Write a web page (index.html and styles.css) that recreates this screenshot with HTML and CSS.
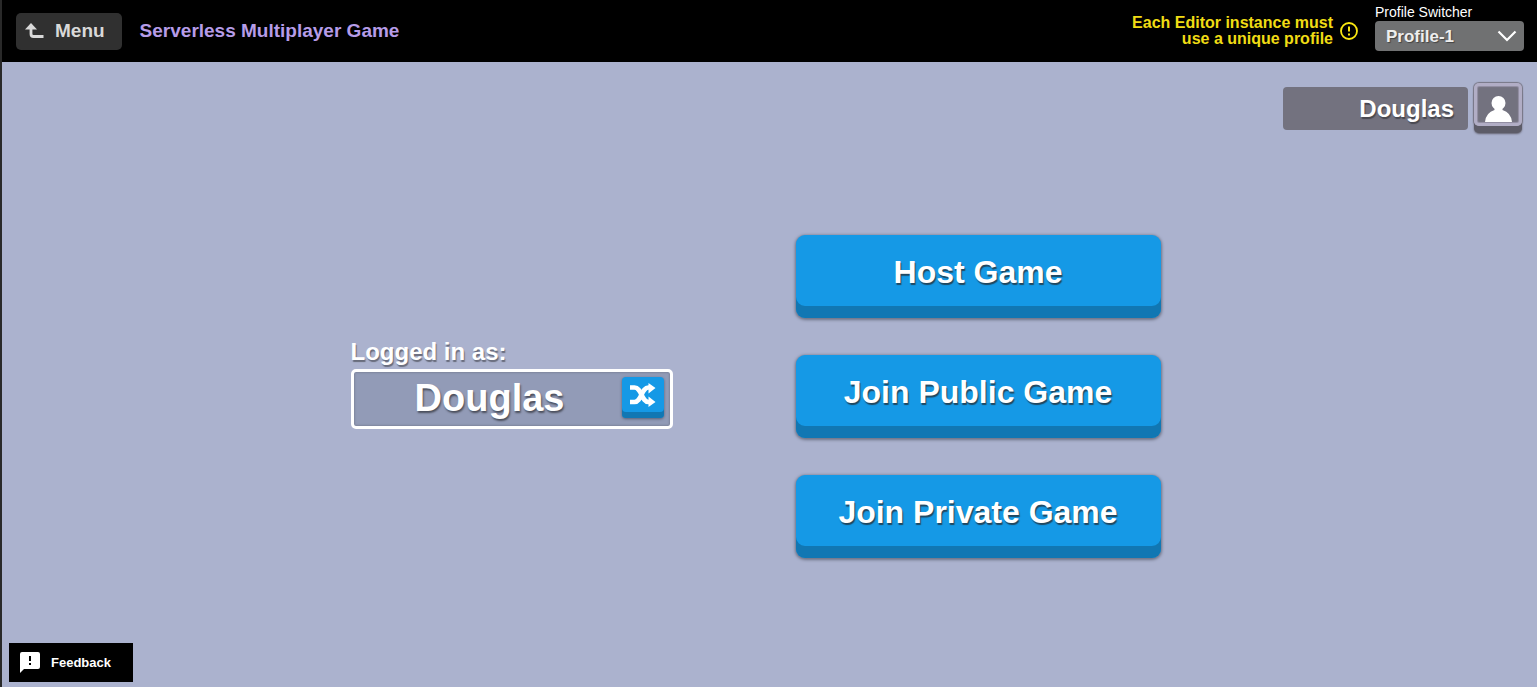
FILE: index.html
```html
<!DOCTYPE html>
<html lang="en">
<head>
<meta charset="utf-8">
<title>Serverless Multiplayer Game</title>
<link rel="stylesheet" href="styles.css">
</head>
<body>
<header class="topbar">
  <button class="menu" type="button">
    <svg width="20" height="16" viewBox="0 0 20 16" aria-hidden="true"><path d="M6 4v7q0 2.500 2.500 2.500H18.500" fill="none" stroke="currentColor" stroke-width="2.800"/><path d="M6 0 12 6.500H0z" fill="currentColor"/></svg>
    <span>Menu</span>
  </button>
  <h1 class="title">Serverless Multiplayer Game</h1>
  <p class="warning">Each Editor instance must<br>use a unique profile</p>
  <svg class="warning-icon" width="18" height="18" viewBox="0 0 18 18" aria-hidden="true"><circle cx="9" cy="9" r="8" fill="none" stroke="currentColor" stroke-width="1.800"/><path d="M9 4.500v5M9 11.500v2" stroke="currentColor" stroke-width="2"/></svg>
  <div class="switcher">
    <label for="profile">Profile Switcher</label>
    <div class="select-wrap">
      <select id="profile"><option>Profile-1</option></select>
      <svg class="chevron" width="20" height="12" viewBox="0 0 20 12" aria-hidden="true"><path d="m1.500 1.500 8.500 8.500 8.500-8.500" fill="none" stroke="currentColor" stroke-width="2.200"/></svg>
    </div>
  </div>
</header>
<main class="stage">
  <div class="user">
    <span class="user-name">Douglas</span>
    <button class="avatar" type="button" aria-label="Player profile">
      <svg width="27" height="26" viewBox="0 0 27 26" aria-hidden="true"><circle cx="13.500" cy="7" r="7" fill="#fff"/><path d="M9.500 11h8v3q8.500 2.500 9.500 12H0q1-9.500 9.500-12z" fill="#fff"/></svg>
    </button>
  </div>
  <div class="content">
    <section class="login">
      <label class="login-label" for="player">Logged in as:</label>
      <div class="name-box">
        <output class="name" id="player">Douglas</output>
        <button class="shuffle" type="button" aria-label="Random name">
          <svg width="27" height="24" viewBox="0 0 27 24" aria-hidden="true"><path d="M1 4.500h4.500c7 0 7 14.500 14 14.500H21M1 19h4.500c7 0 7-14.500 14-14.500H21" fill="none" stroke="#fff" stroke-width="4.600"/><path d="m19.500 0 7 5-7 5.500zM19.500 13.500l7 5.500-7 5z" fill="#fff"/></svg>
        </button>
      </div>
    </section>
    <nav class="actions">
      <button class="action" type="button">Host Game</button>
      <button class="action" type="button">Join Public Game</button>
      <button class="action" type="button">Join Private Game</button>
    </nav>
  </div>
  <button class="feedback" type="button">
    <svg width="20" height="21" viewBox="0 0 20 21" aria-hidden="true"><path d="M2 0h16q2 0 2 2v13q0 2-2 2H4l-4 4V2q0-2 2-2z" fill="#fff"/><path d="M10 4v5M10 11v2" stroke="#000" stroke-width="2"/></svg>
    <span>Feedback</span>
  </button>
</main>
</body>
</html>
```
FILE: styles.css
```css
* { box-sizing: border-box; }
body {
  margin: 0;
  min-height: 100vh;
  display: flex;
  flex-direction: column;
  border-left: 2px solid #292929;
  background: #abb2ce;
  color: #fff;
  font-family: "Liberation Sans", Arial, sans-serif;
}
button, select {
  font-family: inherit;
  font-weight: 700;
  color: inherit;
  border: 0;
  margin: 0;
  padding: 0;
}
svg { display: block; flex: none; }

.topbar {
  display: flex;
  align-items: center;
  height: 62px;
  padding: 0 13px 0 14px;
  background: #000;
}
.menu {
  display: flex;
  align-items: center;
  gap: 10px;
  height: 37px;
  padding: 0 17px 0 9px;
  border-radius: 5px;
  background: #303030;
  color: #d9d9d9;
  font-size: 19px;
}
.title {
  margin: 0 auto 0 18px;
  color: #b69ce8;
  font-size: 19px;
  line-height: 24px;
}
.warning {
  margin: 0 7px 0 0;
  color: #f0dc14;
  font-size: 16px;
  font-weight: 700;
  line-height: 16px;
  text-align: right;
}
.warning-icon { color: #fbe811; }
.switcher {
  width: 149px;
  margin: 0 0 8px 17px;
  font-size: 14px;
  line-height: 18px;
}
.switcher label { display: block; }
.select-wrap { position: relative; }
.select-wrap select {
  appearance: none;
  display: block;
  width: 100%;
  height: 30px;
  padding: 0 36px 0 11px;
  border-radius: 4px;
  background: #707172;
  color: #eee;
  font-size: 17px;
  text-shadow: 1px 1px 1px #444;
}
.chevron {
  position: absolute;
  top: 9px;
  right: 7px;
  pointer-events: none;
}

.stage {
  flex: 1;
  display: flex;
  flex-direction: column;
  padding: 21px 15px 5px 7px;
}
.user {
  display: flex;
  justify-content: flex-end;
  align-items: center;
  gap: 6px;
}
.user-name {
  width: 185px;
  padding: 0 14px;
  border-radius: 4px;
  background: #73727f;
  font-size: 24px;
  font-weight: 700;
  line-height: 43px;
  text-align: right;
  text-shadow: 1px 2px 1px #484850;
}
.avatar {
  display: flex;
  justify-content: center;
  align-items: flex-end;
  width: 48px;
  height: 43px;
  margin-bottom: 7px;
  border-radius: 5px;
  padding-bottom: 4px;
  background: #73727f;
  box-shadow: inset 0 0 0 3px #b1adc5, inset 0 0 1px 4px #9692a7, 0 7px 0 #5d5c68, 0 0 1px 1px #777685, 0 8px 2px #62616e;
}
.content {
  display: flex;
  justify-content: center;
  gap: 123px;
  margin-top: 102px;
  padding-right: 20px;
}
.login { width: 322px; margin-top: 104px; }
.login-label {
  display: block;
  font-size: 24px;
  font-weight: 700;
  line-height: 26px;
  margin-bottom: 4px;
  text-shadow: 1px 2px 1px #686c7c;
}
.name-box {
  display: flex;
  align-items: flex-start;
  height: 60px;
  padding: 0 6px 0 0;
  border: 3px solid #fff;
  border-radius: 5px;
  background: #929bb7;
  box-shadow: inset 0 0 2px 1px #7e859d;
}
.name {
  flex: 1;
  padding-left: 4px;
  font-size: 38px;
  font-weight: 700;
  line-height: 52px;
  text-align: center;
  text-shadow: 1px 2px 2px #4a4e5b;
}
.shuffle {
  display: flex;
  justify-content: center;
  align-items: flex-start;
  width: 42px;
  height: 41px;
  margin-top: 5px;
  padding-top: 6px;
  border-radius: 4px;
  background: #1599e6;
  box-shadow: inset 0 -6px 0 #1177b3, 0 1px 3px #555d75;
}
.actions {
  display: grid;
  gap: 37px;
  width: 365px;
}
.action {
  height: 83px;
  padding-bottom: 9px;
  border-radius: 9px;
  background: #1599e6;
  box-shadow: inset 0 -12px 0 #1177b3, 0 1px 3px 1px #6d7286;
  font-size: 32px;
  text-shadow: 1px 2px 1px #204860;
}
.feedback {
  display: flex;
  align-items: center;
  align-self: flex-start;
  gap: 11px;
  width: 124px;
  height: 39px;
  margin-top: auto;
  padding-left: 11px;
  background: #000;
  font-size: 13px;
}
```
